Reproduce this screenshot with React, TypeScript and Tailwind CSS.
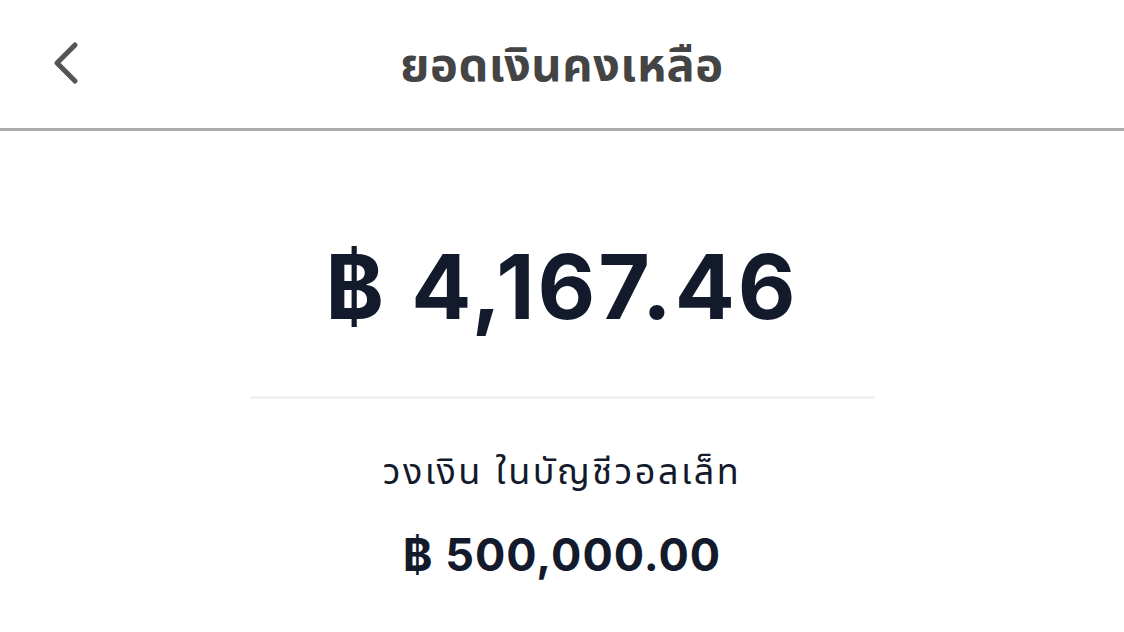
import { ChevronLeft } from "lucide-react";

const font = { fontFamily: "Inter, 'Noto Sans Thai', Tahoma, sans-serif" };

function Header() {
  return (
    <header className="flex h-[131px] items-center border-b-[3px] border-[#ababab] px-[30px]">
      <button className="-mt-[3px] flex w-[80px] items-center text-[#555]">
        <ChevronLeft className="h-[72px] w-[72px]" strokeWidth={1.7} />
      </button>
      <h1 className="flex-1 text-center text-[47px] font-bold tracking-[0.5px] text-[#444]">
        ยอดเงินคงเหลือ
      </h1>
      <div className="w-[80px]" />
    </header>
  );
}

export default function App() {
  return (
    <div style={font} className="h-[632px] w-[1124px] overflow-hidden bg-white">
      <Header />
      <main className="flex flex-col items-center">
        <div className="mt-[111px] text-[89px] font-bold leading-none tracking-[3px] text-[#121a2c]">
          ฿ 4,167.46
        </div>
        <div className="mt-[65px] h-[3px] w-[625px] rounded-full bg-[#f1f1f4]" />
        <p className="mt-[54px] text-[36px] leading-none tracking-[2.5px] text-[#121a2c]">
          วงเงิน ในบัญชีวอลเล็ท
        </p>
        <div className="mt-[43px] text-[45px] font-bold leading-none tracking-[1px] text-[#121a2c]">
          ฿ 500,000.00
        </div>
      </main>
    </div>
  );
}
